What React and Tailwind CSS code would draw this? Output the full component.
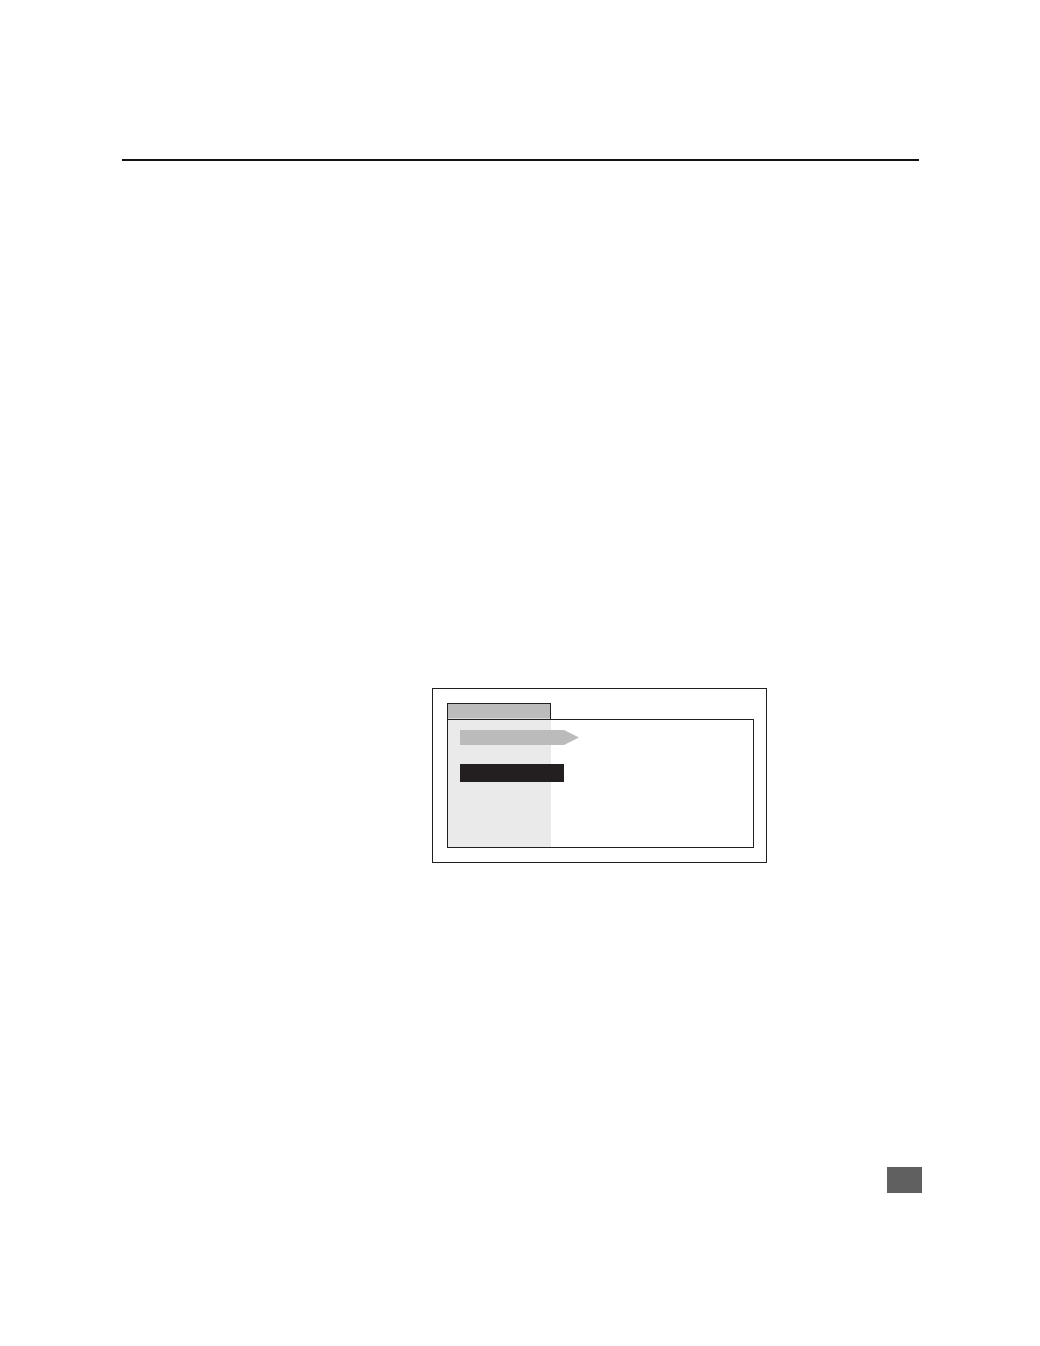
const Arrow = () => {
  return (
    <svg className="block h-[15px] w-[119px] max-w-none" viewBox="0 0 119 15" aria-hidden="true">
      <path d="M0 0H104L119 7.5L104 15H0Z" fill="#bbbbbb" />
    </svg>
  )
}

const TabbedFigure = () => {
  return (
    <figure className="ml-[310px] mt-[527px] w-[335px] border border-[#231f20] bg-white py-3.5 pl-3.5 pr-3">
      <div className="h-4 w-[104px] border-x border-t border-[#231f20]">
        <div className="h-full border-b border-[#dadada] bg-[#bbbbbb]" />
      </div>
      <div className="border border-[#231f20]">
        <div className="w-[103px] bg-[#eaeaea] pb-[65px] pl-3 pt-2.5">
          <Arrow />
          {/* wider than the side column, so it runs over its edge */}
          <div className="mt-[19px] h-[18px] w-[104px] bg-[#231f20]" />
        </div>
      </div>
    </figure>
  )
}

export default function App() {
  return (
    <main className="min-h-screen bg-white pb-[153px] pl-[122px] pr-[118px] pt-[159px]">
      <hr className="mr-[3px] border-0 border-t-2 border-[#151213]" />
      <TabbedFigure />
      <footer className="mt-[304px] flex justify-end">
        <div className="h-[26px] w-[35px] bg-[#606060]" />
      </footer>
    </main>
  )
}
